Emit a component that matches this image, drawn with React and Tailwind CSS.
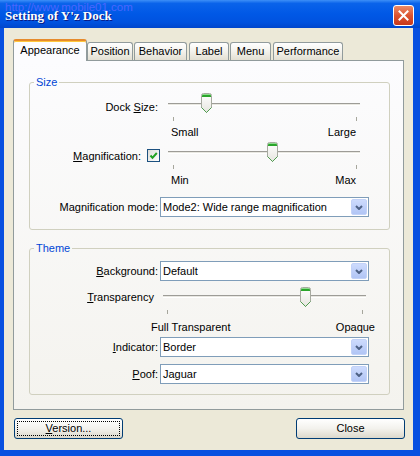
import React from 'react';

const sans = "font-['Liberation_Sans',Arial,sans-serif]";

function Slider({ id, trackFrom, trackTo, trackY, thumbX, tickL, tickR, tickY }) {
  return (
    <svg width="209" height="28" viewBox="0 0 209 28" className="block">
      <defs>
        <linearGradient id={id} x1="0" y1="0" x2="0" y2="1">
          <stop offset="0" stopColor="#ffffff" />
          <stop offset="1" stopColor="#e6e5df" />
        </linearGradient>
      </defs>
      <rect x={trackFrom} y={trackY} width={trackTo - trackFrom} height="1" fill="#9d9c97" />
      <rect x={trackFrom} y={trackY + 1} width={trackTo - trackFrom} height="1" fill="#e9e8e2" />
      <rect x={trackFrom} y={trackY + 2} width={trackTo - trackFrom} height="1" fill="#ffffff" />
      <rect x={tickL} y={tickY} width="1" height="4" fill="#a6a69c" />
      <rect x={tickR} y={tickY} width="1" height="4" fill="#a6a69c" />
      <g transform={`translate(${thumbX},0)`}>
        <path
          d="M0.5 2.5 Q0.5 0.5 2.5 0.5 H8.5 Q10.5 0.5 10.5 2.5 V14.5 L5.5 19.5 L0.5 14.5 Z"
          fill={`url(#${id})`}
          stroke="#a7aaa0"
        />
        <path d="M1 3 Q1 1 3 1 H8 Q10 1 10 3 V4 H1 Z" fill="#2aa52a" />
        <rect x="2" y="1" width="7" height="1" fill="#8fdc8f" />
        <path d="M0.5 14.5 L5.5 19.5 L10.5 14.5" fill="none" stroke="#4f9d4f" />
      </g>
    </svg>
  );
}

function Dropdown({ value }) {
  return (
    <div className="flex h-[20px] w-[209px] items-center border border-[#7f9db9] bg-white pl-[2px] pr-[1px]">
      <span className="flex-1 leading-[13px]">{value}</span>
      <span className="flex h-[16px] w-[16px] items-center justify-center rounded-[2px] border border-[#c2d2f8] bg-linear-to-b from-[#cddbfd] to-[#b1c5f5]">
        <svg width="8" height="5" viewBox="0 0 8 5">
          <path d="M1 1 L4 4 L7 1" fill="none" stroke="#4d6185" strokeWidth="2" />
        </svg>
      </span>
    </div>
  );
}

function Group({ title, children, className = '' }) {
  return (
    <fieldset className={`w-[361px] rounded-[3px] border border-[#d0d0bf] ${className}`}>
      <legend className="ml-[4px] px-[2px] leading-[13px] text-[#0046d5]">{title}</legend>
      {children}
    </fieldset>
  );
}

function Tab({ label, w, ml = '' }) {
  return (
    <div
      className={`flex h-[18px] justify-center rounded-t-[3px] border border-b-0 border-[#919b9c] bg-linear-to-b from-white via-[#f3f2ec] to-[#e3dfd2] pt-[2px] leading-[13px] ${w} ${ml}`}
    >
      {label}
    </div>
  );
}

export default function App() {
  return (
    <div className={`flex h-[456px] w-[420px] flex-col bg-[#0850e0] text-[11px] text-black ${sans}`}>
      <div className="relative flex h-[28px] shrink-0 items-center justify-between bg-[linear-gradient(180deg,#3d8ff7_0%,#0a63ea_12%,#0058e6_50%,#0052df_80%,#0046cc_100%)] pl-[5px] pr-[6px]">
        <span className="mt-[3px] font-['Liberation_Serif',serif] text-[13px] font-bold text-white [text-shadow:1px_1px_#0a1883]">
          Setting of Y'z Dock
        </span>
        <span className="mt-[3px] flex h-[21px] w-[21px] items-center justify-center rounded-[3px] border border-white bg-linear-to-b from-[#ea8a66] via-[#dc5330] to-[#c7381a]">
          <svg width="11" height="11" viewBox="0 0 11 11">
            <path d="M1.5 1.5 L9.5 9.5 M9.5 1.5 L1.5 9.5" stroke="#ffffff" strokeWidth="2" strokeLinecap="square" />
          </svg>
        </span>
        <span className="absolute left-[5px] top-[1px] text-[11.5px] leading-[13px] text-[#4a66ff]">http://www.mobile01.com</span>
      </div>

      <div className="ml-[4px] mr-[7px] mb-[6px] flex-1 bg-[#ece9d8] px-[9px] pt-[11px]">
        <div className="flex h-[21px] items-end">
          <div className="relative z-10 -mb-[1px] flex h-[22px] w-[74px] justify-center rounded-t-[3px] border-x border-[#919b9c] border-t-2 border-t-[#e68b2c] bg-[#fcfcfe] pt-[3px] leading-[13px] shadow-[inset_0_1px_#ffc73c]">
            Appearance
          </div>
          <Tab label="Position" w="w-[46px]" />
          <Tab label="Behavior" w="w-[53px]" ml="ml-[1px]" />
          <Tab label="Label" w="w-[40px]" ml="ml-[2px]" />
          <Tab label="Menu" w="w-[41px]" ml="ml-[1px]" />
          <Tab label="Performance" w="w-[70px]" ml="ml-[2px]" />
        </div>

        <div className="h-[350px] border border-[#919b9c] bg-linear-to-b from-[#fcfcfe] to-[#f4f3ee] px-[15px]">
          <Group title="Size" className="mt-[15px] pt-[4px] pb-[12px]">
            <div className="flex h-[28px]">
              <span className="w-[128px] pt-[8px] text-right leading-[13px]">
                Dock <u>S</u>ize:
              </span>
              <span className="ml-[2px]">
                <Slider id="g1" trackFrom={8} trackTo={200} trackY={10} thumbX={41} tickL={13} tickR={196} tickY={24} />
              </span>
            </div>
            <div className="ml-[141px] mt-[5px] flex w-[185px] justify-between leading-[13px]">
              <span>Small</span>
              <span>Large</span>
            </div>
            <div className="mt-[3px] flex h-[28px]">
              <span className="flex w-[130px] justify-end">
                <span className="pt-[8px] leading-[13px]">
                  <u>M</u>agnification:
                </span>
                <span className="ml-[6px] mt-[7px] flex h-[13px] w-[13px] items-center justify-center border border-[#1c5180] bg-linear-to-br from-[#dcdcd7] to-white">
                  <svg width="9" height="9" viewBox="0 0 9 9">
                    <path d="M1.5 4.5 L3.5 6.8 L7.8 2" fill="none" stroke="#21a121" strokeWidth="2" />
                  </svg>
                </span>
              </span>
              <Slider id="g2" trackFrom={8} trackTo={200} trackY={9} thumbX={107} tickL={13} tickR={196} tickY={23} />
            </div>
            <div className="ml-[141px] mt-[4px] flex w-[185px] justify-between leading-[13px]">
              <span>Min</span>
              <span>Max</span>
            </div>
            <div className="mt-[10px] flex h-[20px] items-center">
              <span className="w-[128px] text-right leading-[13px]">
                Ma<u>g</u>nification mode:
              </span>
              <span className="ml-[2px]">
                <Dropdown value="Mode2: Wide range magnification" />
              </span>
            </div>
          </Group>

          <Group title="Theme" className="mt-[12px] pt-[6px] pb-[10px]">
            <div className="flex h-[20px] items-center">
              <span className="w-[128px] text-right leading-[13px]">
                <u>B</u>ackground:
              </span>
              <span className="ml-[2px]">
                <Dropdown value="Default" />
              </span>
            </div>
            <div className="mt-[6px] flex h-[28px]">
              <span className="w-[124px] pt-[4px] text-right leading-[13px]">
                <u>T</u>ransparency
              </span>
              <span className="ml-[6px]">
                <Slider id="g3" trackFrom={3} trackTo={206} trackY={8} thumbX={140} tickL={7} tickR={202} tickY={23} />
              </span>
            </div>
            <div className="ml-[121px] mt-[6px] flex w-[224px] justify-between leading-[13px]">
              <span>Full Transparent</span>
              <span>Opaque</span>
            </div>
            <div className="mt-[3px] flex h-[20px] items-center">
              <span className="w-[128px] text-right leading-[13px]">
                <u>I</u>ndicator:
              </span>
              <span className="ml-[2px]">
                <Dropdown value="Border" />
              </span>
            </div>
            <div className="mt-[7px] flex h-[20px] items-center">
              <span className="w-[128px] text-right leading-[13px]">
                <u>P</u>oof:
              </span>
              <span className="ml-[2px]">
                <Dropdown value="Jaguar" />
              </span>
            </div>
          </Group>
        </div>

        <div className="mt-[8px] flex justify-between">
          <button
            type="button"
            className="ml-[1px] h-[21px] w-[109px] rounded-[3px] border border-[#003c74] bg-linear-to-b from-white via-[#f3f2ed] to-[#dcd8cb] leading-[13px] outline-1 -outline-offset-4 outline-dotted outline-black"
          >
            <u>V</u>ersion...
          </button>
          <button
            type="button"
            className="-mr-[1px] h-[21px] w-[109px] rounded-[3px] border border-[#003c74] bg-linear-to-b from-white via-[#f3f2ed] to-[#dcd8cb] leading-[13px]"
          >
            Close
          </button>
        </div>
      </div>
    </div>
  );
}
